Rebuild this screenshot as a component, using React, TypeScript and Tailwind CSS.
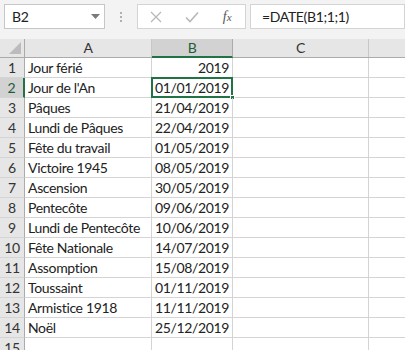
import React from "react";

const rows: [string, string][] = [
  ["Jour férié", "2019"],
  ["Jour de l'An", "01/01/2019"],
  ["Pâques", "21/04/2019"],
  ["Lundi de Pâques", "22/04/2019"],
  ["Fête du travail", "01/05/2019"],
  ["Victoire 1945", "08/05/2019"],
  ["Ascension", "30/05/2019"],
  ["Pentecôte", "09/06/2019"],
  ["Lundi de Pentecôte", "10/06/2019"],
  ["Fête Nationale", "14/07/2019"],
  ["Assomption", "15/08/2019"],
  ["Toussaint", "01/11/2019"],
  ["Armistice 1918", "11/11/2019"],
  ["Noël", "25/12/2019"],
  ["", ""],
];

const font = { fontFamily: "Lato, 'Open Sans', sans-serif" };

export default function App() {
  return (
    <div className="w-[405px] h-[350px] overflow-hidden bg-white text-[#222] tracking-[-0.35px]" style={font}>
      {/* formula bar */}
      <div className="h-[39px] bg-[#f3f3f3] flex items-start pt-[4px]">
        <div className="ml-[4px] w-[101px] h-[25px] bg-white border border-[#c6c6c6] flex items-center justify-between pl-[7px] pr-[4px]">
          <span className="text-[14px] leading-none">B2</span>
          <svg width="9" height="5" viewBox="0 0 9 5"><path d="M0 0h9L4.5 5z" fill="#7a7a7a" /></svg>
        </div>
        <div className="w-[32px] h-[25px] flex flex-col items-center justify-center gap-[2px]">
          <div className="w-[2px] h-[2px] bg-[#b0b0b0]" />
          <div className="w-[2px] h-[2px] bg-[#b0b0b0]" />
          <div className="w-[2px] h-[2px] bg-[#b0b0b0]" />
        </div>
        <div className="w-[109px] h-[25px] bg-white border border-[#d4d4d4] flex items-center">
          <div className="w-[36px] flex justify-center">
            <svg width="12" height="12" viewBox="0 0 12 12"><path d="M1 1L11 11M11 1L1 11" stroke="#b8b8b8" strokeWidth="1.3" /></svg>
          </div>
          <div className="w-[36px] flex justify-center">
            <svg width="14" height="12" viewBox="0 0 14 12"><path d="M1 6.5L5 10.5L13 1.5" stroke="#b8b8b8" strokeWidth="1.6" fill="none" /></svg>
          </div>
          <div className="w-[36px] flex justify-center">
            <span className="text-[14px] italic text-[#555] leading-none tracking-normal" style={{ fontFamily: "'Liberation Serif', serif" }}>
              f<span className="text-[11px]">x</span>
            </span>
          </div>
        </div>
        <div className="ml-[4px] flex-1 h-[25px] bg-white border border-[#d4d4d4] flex items-center pl-[11px]">
          <span className="text-[14px] leading-none">=DATE(B1;1;1)</span>
        </div>
      </div>
      {/* header row */}
      <div className="grid grid-cols-[25px_127px_81px_136px_1fr] h-[19px] bg-[#e6e6e6] border-b border-[#ababab] text-[14px] leading-none">
        <div className="relative border-r border-[#ababab] overflow-hidden">
          <svg className="absolute right-[3px] bottom-[3px]" width="12" height="12" viewBox="0 0 12 12"><path d="M12 0V12H0z" fill="#bcbcbc" /></svg>
        </div>
        <div className="border-r border-[#c8c8c8] flex items-center justify-center text-[#333]">A</div>
        <div className="bg-[#d2d2d2] border-r border-[#ababab] border-b-2 border-b-[#217346] -mb-[1px] flex items-center justify-center text-[#1f5c38]">B</div>
        <div className="border-r border-[#c8c8c8] flex items-center justify-center text-[#333]">C</div>
        <div />
      </div>
      {/* rows */}
      {rows.map(([a, b], i) => {
        const sel = i === 1;
        return (
          <div key={i} className="grid grid-cols-[25px_127px_81px_136px_1fr] h-[20px] text-[14px] leading-none">
            <div
              className={
                "flex items-center justify-center border-b border-[#d4d4d4] " +
                (sel ? "bg-[#d2d2d2] border-r-2 border-r-[#217346] text-[#1f5c38]" : "bg-[#e6e6e6] border-r border-r-[#ababab] text-[#333]")
              }
            >
              {i + 1}
            </div>
            <div className="flex items-center pl-[3px] border-r border-b border-[#d4d4d4] whitespace-nowrap">{a}</div>
            <div className="relative flex items-center justify-end pr-[3px] border-r border-b border-[#d4d4d4] whitespace-nowrap">
              {b}
              {sel && (
                <>
                  <div className="absolute left-[-1px] top-[-1px] right-[-1px] bottom-[-1px] border-2 border-[#217346]" />
                  <div className="absolute right-[-3px] bottom-[-3px] w-[5px] h-[5px] bg-[#217346] border border-white" />
                </>
              )}
            </div>
            <div className="border-r border-b border-[#d4d4d4]" />
            <div className="border-b border-[#d4d4d4]" />
          </div>
        );
      })}
    </div>
  );
}
